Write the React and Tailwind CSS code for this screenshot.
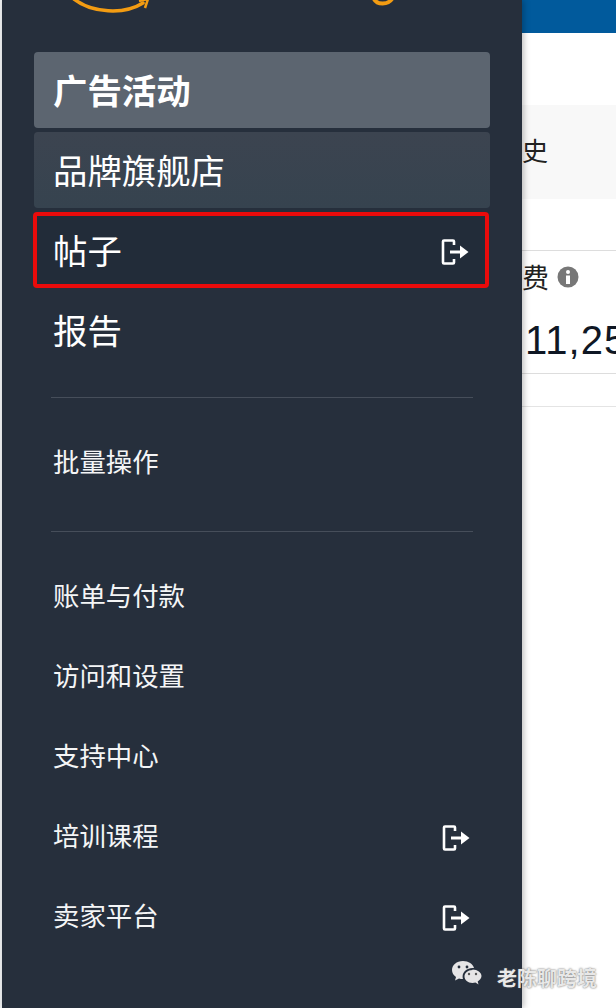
const font = "font-['Noto_Sans_CJK_SC','Liberation_Sans',sans-serif]";

function ExitIcon() {
    return (
        <svg width="30" height="30" viewBox="0 0 30 30" fill="none" stroke="white" strokeWidth="2.6" className="translate-y-[2px]">
            <path d="M14 22v3.500a1 1 0 0 1-1 1H4a1 1 0 0 1-1-1v-21a1 1 0 0 1 1-1h9a1 1 0 0 1 1 1V8" />
            <path d="M10 15h11" strokeWidth="3" />
            <path d="M20 8.500 L28.500 15 L20 21.500 Z" fill="white" stroke="none" />
        </svg>
    );
}

function BigItem({ label, className = "", bold, exit }) {
    return (
        <div className={`h-[76px] mb-1 rounded flex items-center justify-between pl-[19px] pr-[19px] text-[34.4px] leading-[48px] text-white ${bold ? "font-bold" : ""} ${className}`}>
            <span className="-translate-y-px">{label}</span>
            {exit && <ExitIcon />}
        </div>
    );
}

function SmallItem({ label, exit }) {
    return (
        <div className="h-20 flex items-center justify-between pl-[19px] pr-[19px] text-[26.4px] text-[#f4f5f6]">
            <span className="-translate-y-px">{label}</span>
            {exit && <ExitIcon />}
        </div>
    );
}

export default function App() {
    return (
        <div className={`relative w-[616px] h-[1008px] overflow-hidden flex bg-white ${font}`}>
            <div className="w-0.5 bg-[#eef0f1]" />

            <div className="w-[520px] shrink-0 z-10 bg-[#262f3c] px-8 shadow-[2px_0_6px_rgba(0,0,0,0.25)]">
                <div className="h-[52px]">
                    <svg width="456" height="52" viewBox="0 0 456 52" fill="none" className="-ml-8">
                        <path d="M72 -1C90 13 122 15 141 3" stroke="#f39c12" strokeWidth="3.500" strokeLinecap="round" />
                        <path d="M137 1 L146 -1 L143 8" stroke="#f39c12" strokeWidth="2.500" />
                        <path d="M372 -1C375 5 386 5 390 -1" stroke="#f39c12" strokeWidth="4" strokeLinecap="round" />
                    </svg>
                </div>

                <BigItem label="广告活动" bold className="bg-[#5c6570]" />
                <BigItem label="品牌旗舰店" className="bg-gradient-to-b from-[#3c4450] to-[#36434f]" />
                <BigItem label="帖子" exit className="border-4 border-[#ea0b0b] !pl-[16px] !pr-[15px] -mx-px w-[456px] bg-[#222c39]" />
                <BigItem label="报告" className="mb-0" />

                <div className="mx-[17px] mt-[29px] border-t border-[#464e5a]" />
                <div className="h-[133px] flex flex-col justify-center">
                    <div className="pl-[19px] text-[26.4px] text-[#f4f5f6] mb-[7px]">批量操作</div>
                </div>
                <div className="mx-[17px] mb-6 border-t border-[#464e5a]" />

                <SmallItem label="账单与付款" />
                <SmallItem label="访问和设置" />
                <SmallItem label="支持中心" />
                <SmallItem label="培训课程" exit />
                <SmallItem label="卖家平台" exit />
            </div>

            <div className="flex-1 min-w-0 overflow-hidden">
                <div className="h-[33px] bg-[#015a9c]" />
                <div className="h-[72px] bg-white" />
                <div className="h-[94px] bg-[#f8f8f8] flex items-center text-[26px] text-[#222]">
                    <span className="-ml-[26px] -translate-y-[3px] whitespace-nowrap">历史</span>
                </div>
                <div className="h-[52px] bg-white border-b border-[#dddddd]" />
                <div className="h-[123px] pt-2 border-b border-[#dddddd] bg-white">
                    <div className="flex items-center gap-[8px] text-[27px] leading-[36px] text-[#222]">
                        <span className="-ml-[27px] whitespace-nowrap">花费</span>
                        <svg width="22" height="22" viewBox="0 0 22 22">
                            <circle cx="11" cy="11" r="10.500" fill="#777777" />
                            <circle cx="11" cy="6" r="2" fill="white" />
                            <rect x="9" y="9.500" width="4" height="8.500" fill="white" />
                        </svg>
                    </div>
                    <div className="ml-[3px] mt-[21px] text-[40px] leading-[48px] tracking-[1px] whitespace-nowrap text-[#0f1724] font-['Liberation_Sans',sans-serif]">
                        11,25
                    </div>
                </div>
                <div className="h-[33px] border-b border-[#e4e4e4] bg-white" />
            </div>

            <div className="absolute left-[451px] top-[960px] z-20 flex items-center gap-[14px]">
                <svg width="32" height="30" viewBox="0 0 32 30" fill="#e6e5e6">
                    <path d="M12 1C5.500 1 1 5 1 10c0 3 1.500 5.200 4 7l-1 3.500 4-2c1.300.4 2.500.6 4 .6-.3-1-.4-1.600-.4-2.400C11.600 11.500 16 8 21.500 8c.5 0 1 0 1.500.1C22 4 17.500 1 12 1Z" />
                    <path d="M21.500 10C16.700 10 13.500 13 13.500 16.500S16.700 23 21.500 23c1 0 2-.2 3-.5l3 2-.8-3c2.200-1.400 3.800-3.300 3.800-5.500 0-3.500-4-6.500-9-6.500Z" />
                    <circle cx="8" cy="7" r="1.400" fill="#262f3c" />
                    <circle cx="16" cy="7" r="1.400" fill="#262f3c" />
                    <circle cx="18" cy="14" r="1.200" fill="#555" />
                    <circle cx="25" cy="14" r="1.200" fill="#555" />
                </svg>
                <span className="translate-y-[3px] text-[20px] font-bold text-[#e8e8e8] [text-shadow:0_0_2px_#555]">老陈聊跨境</span>
            </div>
        </div>
    );
}
